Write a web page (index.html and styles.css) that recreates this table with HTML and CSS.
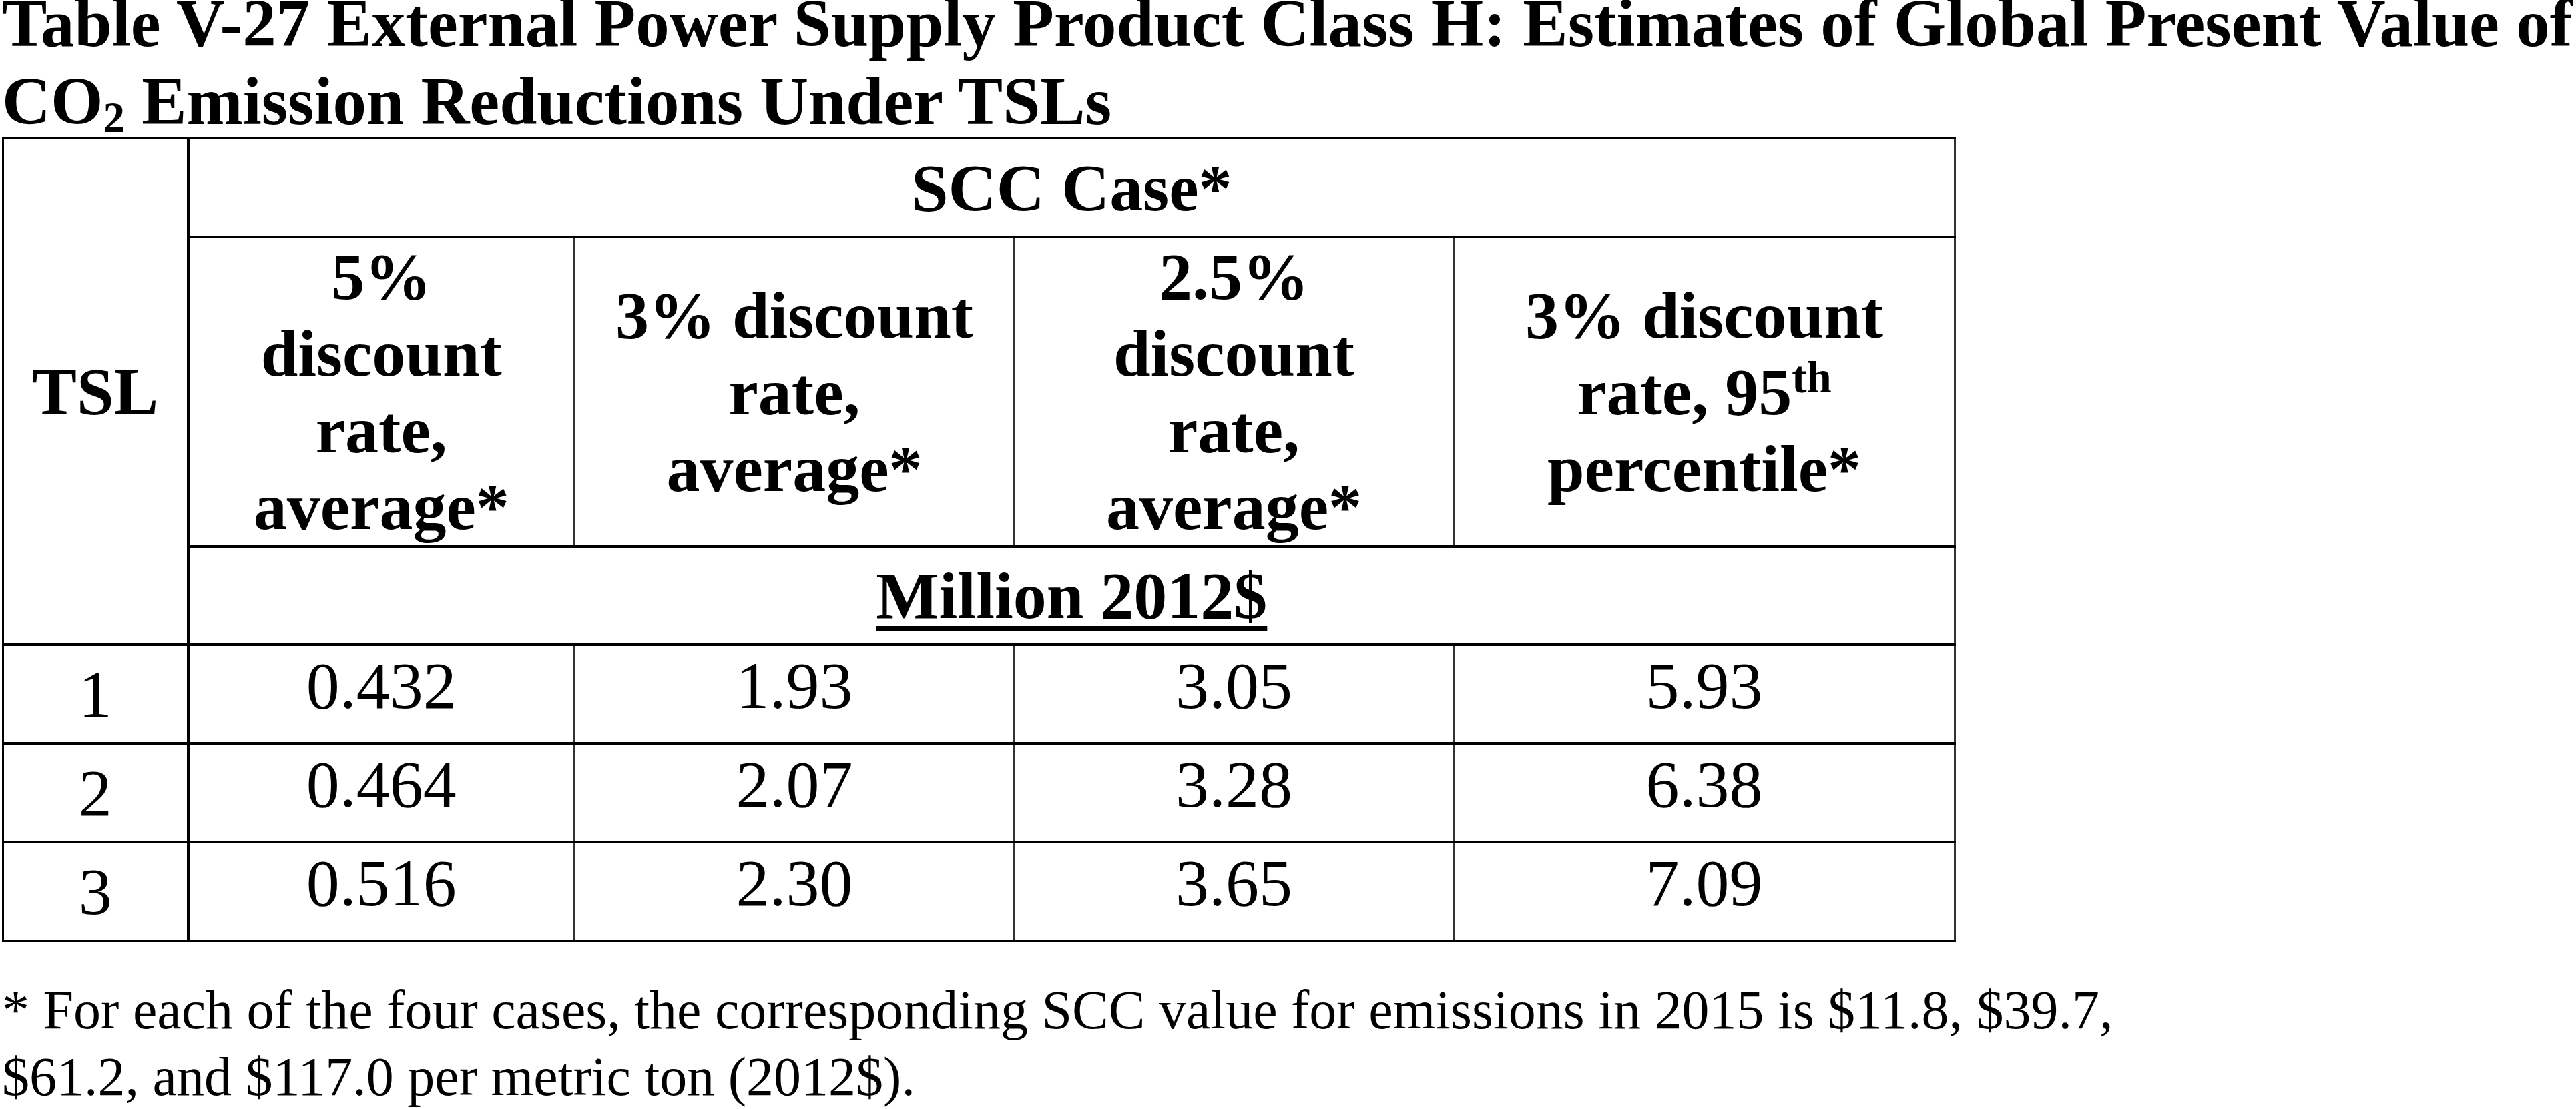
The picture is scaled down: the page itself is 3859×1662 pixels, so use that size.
FILE: index.html
```html
<!DOCTYPE html>
<html lang="en">
<head>
<meta charset="utf-8">
<title>Table V-27</title>
<link rel="stylesheet" href="styles.css">
</head>
<body>
<div class="page">
  <h1 class="title">Table V-27 External Power Supply Product Class H: Estimates of Global Present Value of<br>CO<sub class="sub">2</sub> Emission Reductions Under TSLs</h1>
  <table class="tbl">
    <colgroup>
      <col class="c-tsl"><col class="c1"><col class="c2"><col class="c3"><col class="c4">
    </colgroup>
    <tr class="r-scc">
      <th class="tsl" rowspan="3">TSL</th>
      <th class="hd last" colspan="4">SCC Case*</th>
    </tr>
    <tr class="r-head">
      <th class="hd">5%<br>discount<br>rate,<br>average*</th>
      <th class="hd">3% discount<br>rate,<br>average*</th>
      <th class="hd">2.5%<br>discount<br>rate,<br>average*</th>
      <th class="hd last">3% discount<br>rate, 95<sup class="sup">th</sup><br>percentile*</th>
    </tr>
    <tr class="r-unit">
      <th class="hd last" colspan="4"><span class="unit">Million 2012$</span></th>
    </tr>
    <tr class="r-data">
      <td class="tsln">1</td><td class="num">0.432</td><td class="num">1.93</td><td class="num">3.05</td><td class="num last">5.93</td>
    </tr>
    <tr class="r-data">
      <td class="tsln">2</td><td class="num">0.464</td><td class="num">2.07</td><td class="num">3.28</td><td class="num last">6.38</td>
    </tr>
    <tr class="r-data">
      <td class="tsln">3</td><td class="num">0.516</td><td class="num">2.30</td><td class="num">3.65</td><td class="num last">7.09</td>
    </tr>
  </table>
  <p class="note">* For each of the four cases, the corresponding SCC value for emissions in 2015 is $11.8, $39.7,<br>$61.2, and $117.0 per metric ton (2012$).</p>
</div>
</body>
</html>
```

FILE: styles.css
```css
html, body {
  margin: 0;
  padding: 0;
  background: #fff;
}

body {
  font-family: "Liberation Serif", "Times New Roman", serif;
  color: #000;
}

.page {
  padding-left: 3px;
  width: 3850px;
}

.title {
  font-size: 101px;
  font-weight: bold;
  line-height: 117px;
  margin: -23px 0 -6px 0;
  white-space: nowrap;
}

.sub {
  font-size: 65px;
  line-height: 0;
  vertical-align: -12px;
}

.tbl {
  border-collapse: collapse;
  table-layout: fixed;
  width: 2924px;
}

.c-tsl { width: 277px; }
.c1 { width: 579px; }
.c2 { width: 659px; }
.c3 { width: 658px; }
.c4 { width: 751px; }

.tbl th,
.tbl td {
  font-size: 100px;
  line-height: 115px;
  text-align: center;
  padding: 0 10px;
  border-top: 4px solid #000;
  border-bottom: 4px solid #000;
  border-left: 3px solid #333;
  border-right: 3px solid #333;
}

.tbl th {
  font-weight: bold;
  vertical-align: middle;
}

.tbl td {
  font-weight: normal;
}

.tbl .tsl,
.tbl .tsln {
  border-left: 3px solid #000;
  border-right: 4px solid #000;
  vertical-align: middle;
}

.tbl .num {
  vertical-align: top;
  padding-top: 2px;
}

.r-scc { height: 148px; }
.r-head { height: 464px; }
.r-unit { height: 147px; }
.r-data { height: 148px; }

.sup {
  font-size: 67px;
  line-height: 0;
  vertical-align: 33px;
}

.unit {
  text-decoration: underline;
  text-decoration-thickness: 8px;
  text-underline-offset: 12px;
}

.note {
  font-size: 82px;
  line-height: 100px;
  margin: 52px 0 0 0;
  white-space: nowrap;
}
```
